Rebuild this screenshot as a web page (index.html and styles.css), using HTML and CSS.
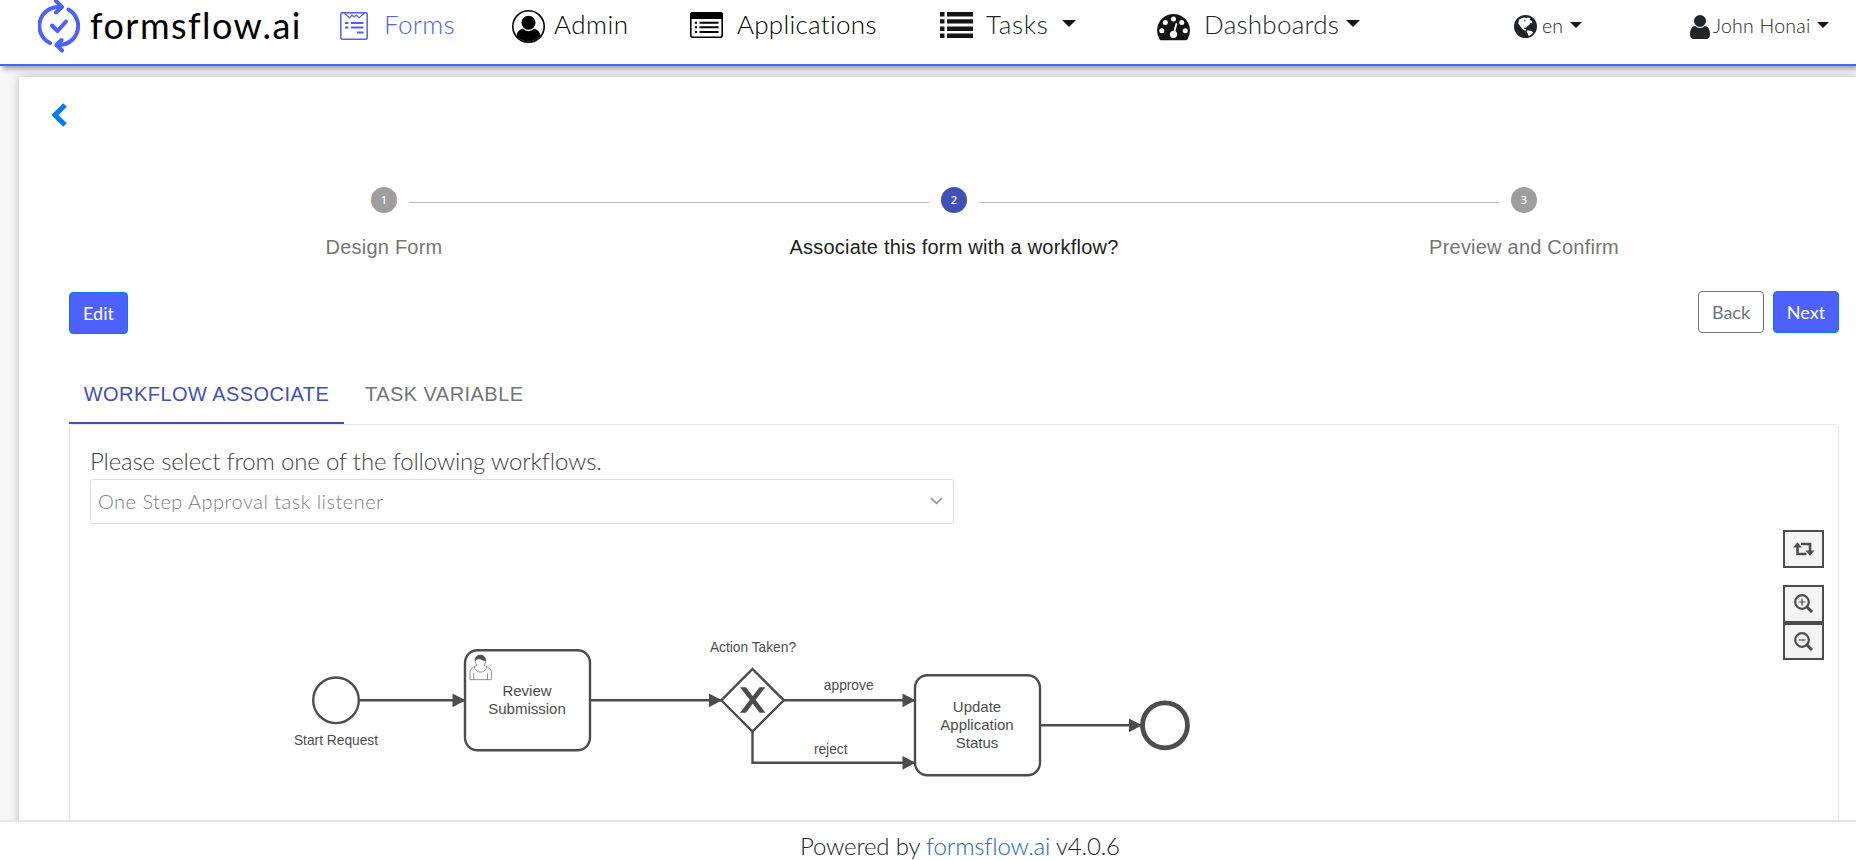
FILE: index.html
```html
<!DOCTYPE html>
<html lang="en">
<head>
<meta charset="utf-8">
<title>formsflow.ai</title>
<link rel="stylesheet" href="styles.css">
</head>
<body>
<div class="app">
  <header class="header">
    <a class="brand">
      <svg width="42" height="54" viewBox="38 -1 42 54" fill="none" stroke="#4c61ff" stroke-width="4" stroke-linecap="round" stroke-linejoin="round">
        <path d="M50 43A19 19 0 0 1 60 7"/><path d="M56 1L62 7L56 12.500"/>
        <path d="M68.500 9.500A19 19 0 0 1 60 45"/><path d="M61.500 40L56.500 45L62 50.500"/>
        <path d="M52 25.500L57.500 31L66 21.500"/>
      </svg>
      <span class="brand-name">formsflow.ai</span>
    </a>
    <a class="nav-item active">
      <svg class="i-forms" width="28" height="28" viewBox="0 0 28 28" fill="none" stroke="#4c61ff" stroke-width="1.500">
        <rect x=".8" y=".8" width="26.400" height="26.400" rx="1.500"/>
        <path d="M4 1L9.500 6L12 3L14 5L16.500 3L19 6L24.500 1" stroke-width="1.200"/>
        <path d="M5 11H8.500M11 11H23.500M5 15.500H8.500M11 15.500H23.500M17 20.500H23.500" stroke-width="2"/>
      </svg>
      <span class="t-forms">Forms</span>
    </a>
    <a class="nav-item black">
      <svg class="i-admin" width="33" height="33" viewBox="0 0 33 33">
        <circle cx="16.500" cy="16.500" r="15.700" fill="#fff" stroke="#000" stroke-width="1.600"/>
        <circle cx="16.500" cy="12.800" r="7"/>
        <path d="M4.500 26C5 21.500 7.500 19.500 11 18.800Q16.500 23.500 22 18.800C25.500 19.500 28 21.500 28.500 26A15.700 15.700 0 0 1 4.500 26z"/>
      </svg>
      <span class="t-admin">Admin</span>
    </a>
    <a class="nav-item black">
      <svg class="i-apps" width="33" height="26" viewBox="0 0 33 26">
        <rect x=".8" y=".8" width="31.400" height="24.400" rx="2" fill="#fff" stroke="#000" stroke-width="1.600"/>
        <path d="M0 7V3Q0 0 3 0H30Q33 0 33 3V7z"/>
        <path d="M4.800 10.800H7M4.800 15.300H7M4.800 20H7M9.500 10.800H28.500M9.500 15.300H28.500M9.500 20H28.500" stroke="#000" stroke-width="2"/>
      </svg>
      <span class="t-apps">Applications</span>
    </a>
    <a class="nav-item">
      <svg class="i-apps" width="33" height="26" viewBox="0 0 33 26" fill="#141414">
        <path d="M0 0h4.500v4.500H0zM7 0h26v4.500H7zM0 7.200h4.500v4.400H0zM7 7.200h26v4.400H7zM0 14.400h4.500v4.500H0zM7 14.400h26v4.500H7zM0 21.500h4.500V26H0zM7 21.500h26V26H7z"/>
      </svg>
      <span class="t-tasks">Tasks</span><i class="caret"></i>
    </a>
    <a class="nav-item">
      <svg class="i-dash" width="33" height="27" viewBox="0 0 33 27">
        <path d="M16.500 0A16.500 16.500 0 0 0 0 16.500Q0 21.500 2.600 25.500Q3 26.300 4 26.300H29Q30 26.300 30.400 25.500Q33 21.500 33 16.500A16.500 16.500 0 0 0 16.500 0z" fill="#141414"/>
        <g fill="#fff"><circle cx="4.800" cy="16.700" r="2.500"/><circle cx="8.300" cy="8.500" r="2.500"/><circle cx="16.500" cy="5" r="2.500"/><circle cx="24.800" cy="8.500" r="2.500"/><circle cx="28.300" cy="16.700" r="2.500"/><circle cx="16.500" cy="20.300" r="3.600"/></g>
        <path d="M17 19L19.300 10" stroke="#fff" stroke-width="1.800" stroke-linecap="round"/>
      </svg>
      <span class="t-dash">Dashboards</span><i class="caret"></i>
    </a>
    <a class="nav-item small">
      <svg class="i-globe" width="23" height="23" viewBox="0 0 23 23">
        <circle cx="11.500" cy="11.500" r="11.500" fill="#212529"/>
        <path d="M5 4.800Q7.500 2.800 10.500 2.400L12.500 3.200L14 2.400L16.500 3.600L15.500 5L18 6L18.300 8.200L16.200 8L15.500 9.800L13 11.200L12.300 12.800L10.500 12.200L10 13.500L12 14.300L12.200 15.800L10 15.300L7.500 13L5.800 10.500L4.200 8.500z" fill="#fff"/>
        <path d="M13.500 15.200L17.500 16L19.300 17.500Q17.500 20 14.500 21L13.800 18.500L12.700 17z" fill="#fff"/>
        <path d="M10 4.500L12 6L10.500 6.500z" fill="#212529"/>
      </svg>
      <span class="t-en">en</span><i class="caret"></i>
    </a>
    <a class="nav-item small">
      <svg class="i-user" width="20" height="24" viewBox="0 128 1280 1536" fill="#212529">
        <path d="M1280 1399q0 109-62.500 187t-150.500 78h-854q-88 0-150.500-78t-62.500-187q0-85 8.500-160.500t31.500-152 58.500-131 94-89 134.500-34.500q131 128 313 128t313-128q76 0 134.500 34.500t94 89 58.500 131 31.500 152 8.500 160.500zm-256-887q0 159-112.500 271.500t-271.500 112.500-271.500-112.500-112.500-271.500 112.500-271.500 271.500-112.500 271.500 112.500 112.500 271.500z"/>
      </svg>
      <span class="t-user">John Honai</span><i class="caret"></i>
    </a>
  </header>

  <main class="main">
    <section class="card">
      <a class="back-link">
        <svg width="16" height="24" viewBox="0 0 16 24" fill="none" stroke="#007bff" stroke-width="5"><path d="M14 2L4 12L14 22"/></svg>
      </a>
      <div class="stepper">
        <div class="step"><span class="dot">1</span><span class="step-label">Design Form</span></div>
        <div class="step current"><span class="dot">2</span><span class="step-label">Associate this form with a workflow?</span></div>
        <div class="step"><span class="dot">3</span><span class="step-label">Preview and Confirm</span></div>
      </div>
      <div class="actions">
        <button class="btn primary edit">Edit</button>
        <div class="right-actions">
          <button class="btn outline">Back</button>
          <button class="btn primary">Next</button>
        </div>
      </div>
      <div class="tabs">
        <div class="tab selected">WORKFLOW ASSOCIATE</div>
        <div class="tab second">TASK VARIABLE</div>
      </div>
      <div class="panel">
        <label class="prompt">Please select from one of the following workflows.</label>
        <div class="select">
          <span class="select-value">One Step Approval task listener</span>
          <svg width="13" height="8" viewBox="0 0 13 8" fill="none" stroke="#8f8f8f" stroke-width="1.600"><path d="M1 1L6.500 6.300L12 1"/></svg>
        </div>
        <div class="canvas">
          <svg class="diagram" width="1300" height="296" viewBox="90 524 1300 296">
            <defs>
              <marker id="arrow" viewBox="0 0 20 20" refX="11" refY="10" markerWidth="26" markerHeight="26" markerUnits="userSpaceOnUse" orient="auto"><path d="M1 4.700L11 10L1 15.300z" fill="#4d4d4d"/></marker>
            </defs>
            <g fill="#fff" stroke="#4d4d4d" stroke-width="2.400">
              <g fill="none">
                <path marker-end="url(#arrow)" d="M359 700.300H465.500"/>
                <path marker-end="url(#arrow)" d="M590 700.300H722"/>
                <path marker-end="url(#arrow)" d="M784 700.300H915.500"/>
                <path marker-end="url(#arrow)" d="M752.500 731V762.800H915.500"/>
                <path marker-end="url(#arrow)" d="M1040 725.300H1142"/>
              </g>
              <circle cx="336" cy="700.300" r="22.800"/>
              <rect x="465" y="650.300" width="125" height="100" rx="12.500"/>
              <path d="M752.500 669L783.800 700.300L752.500 731.500L721.300 700.300z"/>
              <rect x="915" y="675.300" width="125" height="100" rx="12.500"/>
              <circle cx="1165" cy="725.300" r="22.500" stroke-width="4.800"/>
            </g>
            <path transform="translate(721.300 669) scale(1.250)" fill="#4d4d4d" stroke="#4d4d4d" stroke-width="1" d="m16 15 7.430 9.710-7.430 9.710h3.430l5.710-7.460 5.710 7.460h3.430l-7.430-9.710 7.430-9.710h-3.430l-5.710 7.460-5.710-7.460z"/>
            <g transform="translate(465 650.300) scale(1.250)" fill="#fff" stroke="#4d4d4d" stroke-width=".5">
              <path d="m15 12c.909-.845 1.594-2.049 1.594-3.385 0-2.554-1.805-4.622-4.357-4.622-2.552 0-4.288 2.068-4.288 4.622 0 1.348.974 2.562 1.896 3.405-.529.187-5.669 2.097-5.794 4.756v6.718h17v-6.718c0-2.298-5.528-4.595-6.051-4.776zm-8 6v5.500m11 0v-5"/>
              <path d="m17.162 13.009c0 2.447-2.158 4.431-4.821 4.431-2.665 0-4.822-1.981-4.822-4.431"/>
              <path fill="#4d4d4d" d="m8.100 8.200c0 0 2.251-2.358 4.274-1.177 2.024 1.181 4.221 1.537 4.124.965-.098-.57-.117-3.791-4.191-4.136-3.573.001-4.208 3.367-4.207 4.348z"/>
            </g>
            <g class="task-text">
              <text x="527" y="696">Review</text><text x="527" y="714">Submission</text>
              <text x="977" y="712.300">Update</text><text x="977" y="730.300">Application</text><text x="977" y="748.300">Status</text>
            </g>
            <g class="flow-text">
              <text x="336" y="744.500">Start Request</text><text x="753" y="651.500">Action Taken?</text>
              <text x="848.700" y="690.300">approve</text><text x="830.700" y="754">reject</text>
            </g>
          </svg>
          <div class="tools">
            <button class="tool reset"><svg width="22" height="14" viewBox="0 0 22 14" fill="none" stroke="#4d4d4d" stroke-width="2.600"><path d="M4.500 4V12H13.500M8 2H17V9"/><path d="M0 5.500L4.500 .3L9 5.500zM12.500 8.500H21.500L17 13.700z" fill="#4d4d4d" stroke="none"/></svg></button>
            <button class="tool"><svg width="20" height="20" viewBox="0 0 20 20" fill="none" stroke="#4d4d4d"><circle cx="8" cy="8" r="6.800" stroke-width="2.200"/><path d="M13 13L18 18" stroke-width="3"/><path d="M4.500 8H11.500M8 4.500V11.500" stroke-width="1.200"/></svg></button>
            <button class="tool out"><svg width="20" height="20" viewBox="0 0 20 20" fill="none" stroke="#4d4d4d"><circle cx="8" cy="8" r="6.800" stroke-width="2.200"/><path d="M13 13L18 18" stroke-width="3"/><path d="M4.500 8H11.500" stroke-width="1.200"/></svg></button>
          </div>
        </div>
      </div>
    </section>
  </main>
  <footer class="footer"><span>Powered by <a class="link">formsflow.ai</a> v4.0.6</span></footer>
</div>
</body>
</html>
```
FILE: styles.css
```css
* { box-sizing: border-box; }
body { margin: 0; font-family: Lato, "Open Sans", sans-serif; font-weight: 300; color: #212529; }
.app { display: flex; flex-direction: column; height: 860px; overflow: hidden; background: #f7f7f7; }

.header {
  flex: none; height: 66px; padding-left: 38px; background: #fff;
  border-bottom: 2px solid #4c61ff; box-shadow: 3px 2px 6px rgba(0, 0, 0, .45);
  display: grid; grid-template-columns: 302px 172px 178px 250px 217px 357px 176px 1fr;
  align-items: start; position: relative; z-index: 2;
}
.brand, .nav-item { display: flex; align-items: flex-start; white-space: nowrap; }
.brand svg { margin-top: -1px; }
.brand-name { margin-left: 10px; font-size: 36px; font-weight: 400; line-height: 50px; color: #000; letter-spacing: 1.45px; }
.nav-item { font-size: 26px; line-height: 49px; color: #212529; }
.nav-item.active { color: #4c61ff; }
.nav-item.black { color: #000; }
.nav-item svg { flex: none; }
.i-forms, .i-apps { margin-top: 12px; }
.i-admin { margin-top: 10px; }
.i-dash { margin-top: 14px; }
.i-globe, .i-user { margin-top: 15px; }
.t-forms { margin-left: 16px; letter-spacing: .3px; }
.t-admin { margin-left: 9px; letter-spacing: .5px; }
.t-apps { margin-left: 14px; letter-spacing: .28px; }
.t-tasks { margin-left: 13px; width: 76px; letter-spacing: .7px; }
.t-dash { margin-left: 14px; width: 142px; letter-spacing: .25px; }
.t-en { margin-left: 5px; width: 28px; }
.t-user { margin-left: 3px; width: 104px; letter-spacing: .25px; }
.nav-item.small { font-size: 19.5px; line-height: 52px; }
.caret { margin-top: 20px; border: 7px solid transparent; border-top-color: #141414; border-bottom: 0; }
.small .caret { margin-top: 22px; border-width: 6px 6px 0; }

.main { flex: 1; min-height: 0; padding: 11px 0 0 19px; }
.card { height: 760px; padding: 26px 17px 0 50px; background: #fff; box-shadow: 0 0 9px rgba(0, 0, 0, .25); }
.back-link { display: block; width: 16px; height: 24px; margin-left: -18px; }
.back-link svg { display: block; }

.stepper { display: flex; margin: 60px 30px 0; }
.step {
  flex: 1; display: flex; flex-direction: column; align-items: center; position: relative;
  font-family: "Liberation Sans", Arial, sans-serif; font-weight: 400; color: #757575;
}
.step + .step::before {
  content: ""; position: absolute; top: 15px; left: calc(-50% + 25px); right: calc(50% + 25px);
  border-top: 1px solid #bdbdbd;
}
.dot { width: 26px; height: 26px; border-radius: 50%; background: #9e9e9e; color: #fff; font: 500 11px/26px "Noto Sans", sans-serif; text-align: center; }
.step-label { margin-top: 22px; font-size: 20px; line-height: 24px; letter-spacing: .22px; white-space: nowrap; }
.current { color: #212121; }
.current .dot { background: #3f51b5; }

.actions { display: flex; justify-content: space-between; height: 44px; margin-top: 32px; }
.right-actions { display: flex; gap: 9px; }
.btn {
  height: 42px; width: 66px; padding: 0; border-radius: 4px; border: 1px solid #007bff;
  font: 400 18px/38px Lato, "Open Sans", sans-serif;
}
.edit { width: 59px; margin-top: 1px; }
.primary { background: #4c61ff; color: #fff; }
.outline { background: #fff; border-color: #6c757d; color: #6c757d; }

.tabs { display: flex; height: 60px; margin-top: 29px; }
.tab { font: 400 20px/60px "Liberation Sans", Arial, sans-serif; letter-spacing: .45px; white-space: nowrap; color: #757575; }
.selected { width: 275px; height: 60px; text-align: center; color: #3f51b5; border-bottom: 2px solid #3f51b5; }
.second { margin-left: 21px; }

.panel { height: 460px; padding: 22px 19px 0 20px; border: 1px solid #e5e5e5; border-radius: 5px; }
.prompt { display: block; height: 32px; font-size: 24px; line-height: 28px; letter-spacing: -.17px; color: #444; white-space: nowrap; }
.select { display: flex; align-items: center; justify-content: space-between; width: 864px; height: 45px; padding: 0 10px 2px 7px; border: 1px solid #dedede; border-radius: 3px; }
.select-value { font-size: 20px; letter-spacing: .48px; color: #808080; white-space: nowrap; }
.canvas { position: relative; height: 296px; }
.diagram { display: block; font-family: "Liberation Sans", Arial, sans-serif; font-weight: 400; }
.task-text, .flow-text { fill: #4d4d4d; text-anchor: middle; font-size: 15px; }
.flow-text { font-size: 13.75px; }
.tools { position: absolute; top: 6px; right: -5px; width: 41px; }
.tool { display: flex; align-items: center; justify-content: center; width: 41px; height: 38px; padding: 0; border: 2px solid #4d4d4d; background: #f4f4f4; }
.reset { margin-bottom: 17px; }
.out { height: 37px; }

.footer { flex: none; height: 40px; position: relative; z-index: 2; background: #fff; border-top: 2px solid #e6e6ee; padding-left: 800px; font-size: 24px; line-height: 47px; letter-spacing: -.18px; white-space: nowrap; }
.link { color: #1a66c8; }
```
